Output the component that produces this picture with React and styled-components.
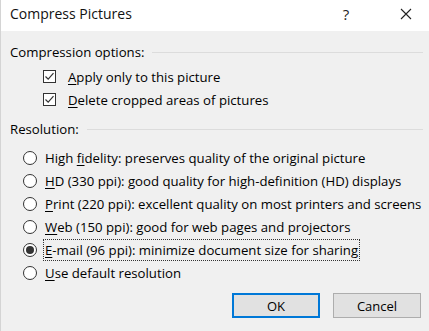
import React from "react";
import styled, { createGlobalStyle } from "styled-components";

const GlobalStyle = createGlobalStyle`
  html, body {
    margin: 0;
    padding: 0;
    background: #f0f0f0;
  }
  body {
    font-family: "Open Sans", "Noto Sans", "Liberation Sans", sans-serif;
    color: #000;
  }
`;

const Dialog = styled.div`
  width: 429px;
  height: 331px;
  box-sizing: border-box;
  background: #f0f0f0;
  border-left: 1px solid #d4d4d4;
  display: flex;
  flex-direction: column;
  overflow: hidden;
`;

const TitleBar = styled.div`
  height: 31px;
  flex: none;
  background: #fff;
  display: flex;
  align-items: center;
  padding-left: 9px;
  font-size: 14px;
  color: #111;
`;

const Title = styled.span`
  flex: 1;
  margin-top: -4px;
`;

const TitleButton = styled.div`
  width: 46px;
  height: 31px;
  margin-right: ${(p) => p.$gap || 0}px;
  display: flex;
  align-items: center;
  justify-content: center;
  font-size: 15px;
  color: #222;
  margin-top: -4px;
`;

const Body = styled.div`
  flex: 1;
  display: flex;
  flex-direction: column;
  padding: 11px 6px 0 9px;
  font-size: 13.2px;
`;

const GroupHeader = styled.div`
  height: 20px;
  display: flex;
  align-items: center;
  gap: 8px;
  margin-top: ${(p) => p.$top || 0}px;

  &::after {
    content: "";
    flex: 1;
    height: 1px;
    background: #dcdcdc;
  }
`;

const OptionList = styled.div`
  display: flex;
  flex-direction: column;
  padding-left: ${(p) => p.$indent}px;
  margin-top: ${(p) => p.$top}px;
`;

const Row = styled.label`
  height: 23px;
  display: flex;
  align-items: center;
  gap: ${(p) => p.$gap}px;
`;

const Box = styled.span`
  width: 13px;
  height: 13px;
  flex: none;
  box-sizing: border-box;
  border: 1px solid #333;
  background: #fff;
  display: flex;
  align-items: center;
  justify-content: center;
`;

const Radio = styled.span`
  width: 14px;
  height: 14px;
  flex: none;
  box-sizing: border-box;
  border: 1px solid #333;
  border-radius: 50%;
  background: #fff;
  display: flex;
  align-items: center;
  justify-content: center;

  &::after {
    content: "";
    width: 8px;
    height: 8px;
    border-radius: 50%;
    background: ${(p) => (p.$on ? "#333" : "transparent")};
  }
`;

const Text = styled.span`
  white-space: nowrap;
  padding: 1px 1px;
  border: 1px dotted ${(p) => (p.$focus ? "#333" : "transparent")};
`;

const Key = styled.u`
  text-underline-offset: 2px;
`;

const Footer = styled.div`
  display: flex;
  justify-content: flex-end;
  gap: 13px;
  padding: 9px 2px 0 0;
`;

const Button = styled.button`
  width: 88px;
  height: 25px;
  box-sizing: border-box;
  background: #e1e1e1;
  border: ${(p) => (p.$primary ? "2px solid #0078d7" : "1px solid #adadad")};
  font-family: inherit;
  font-size: 13px;
  color: #000;
  padding: 0;
`;

const Check = () => (
  <svg width="11" height="11" viewBox="0 0 11 11">
    <path d="M1.5 5.5 L4.2 8.2 L9.5 2.2" fill="none" stroke="#333" strokeWidth="1.2" />
  </svg>
);

const CloseIcon = () => (
  <svg width="12" height="12" viewBox="0 0 12 12">
    <path d="M1 1 L11 11 M11 1 L1 11" stroke="#222" strokeWidth="1.1" />
  </svg>
);

const checks = [
  { key: "A", rest: "pply only to this picture" },
  { key: "D", rest: "elete cropped areas of pictures" },
];

const radios = [
  { pre: "High ", key: "f", rest: "idelity: preserves quality of the original picture" },
  { pre: "", key: "H", rest: "D (330 ppi): good quality for high-definition (HD) displays" },
  { pre: "", key: "P", rest: "rint (220 ppi): excellent quality on most printers and screens" },
  { pre: "", key: "W", rest: "eb (150 ppi): good for web pages and projectors" },
  { pre: "", key: "E", rest: "-mail (96 ppi): minimize document size for sharing", on: true },
  { pre: "", key: "U", rest: "se default resolution" },
];

export default function App() {
  return (
    <>
      <GlobalStyle />
      <Dialog>
        <TitleBar>
          <Title>Compress Pictures</Title>
          <TitleButton $gap={14}>?</TitleButton>
          <TitleButton>
            <CloseIcon />
          </TitleButton>
        </TitleBar>
        <Body>
          <GroupHeader>Compression options:</GroupHeader>
          <OptionList $indent={33} $top={3}>
            {checks.map((c) => (
              <Row key={c.key} $gap={10}>
                <Box>
                  <Check />
                </Box>
                <Text>
                  <Key>{c.key}</Key>
                  {c.rest}
                </Text>
              </Row>
            ))}
          </OptionList>
          <GroupHeader $top={8}>Resolution:</GroupHeader>
          <OptionList $indent={13} $top={7}>
            {radios.map((r) => (
              <Row key={r.key} $gap={6}>
                <Radio $on={r.on} />
                <Text $focus={r.on}>
                  {r.pre}
                  <Key>{r.key}</Key>
                  {r.rest}
                </Text>
              </Row>
            ))}
          </OptionList>
          <Footer>
            <Button $primary>OK</Button>
            <Button>Cancel</Button>
          </Footer>
        </Body>
      </Dialog>
    </>
  );
}
